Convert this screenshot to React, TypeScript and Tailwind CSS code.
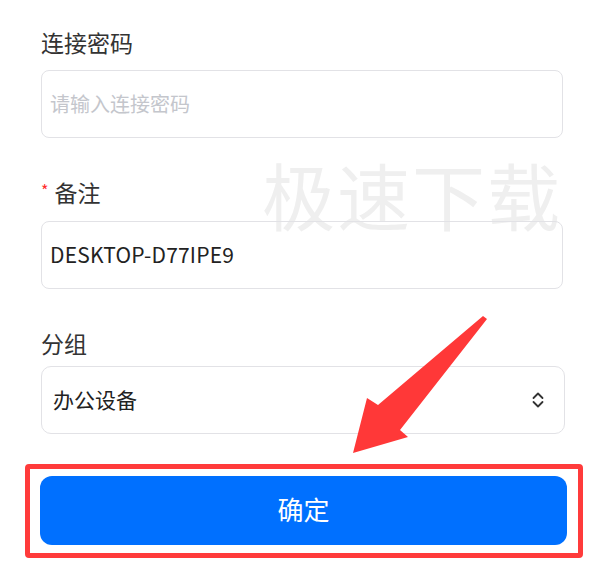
import React from "react";

const font = { fontFamily: '"Noto Sans CJK SC", "Noto Sans", sans-serif' };

export default function App() {
  return (
    <div
      className="relative w-[600px] h-[578px] overflow-hidden bg-white"
      style={font}
    >
      {/* watermark */}
      <div className="pointer-events-none absolute left-[262px] top-[148px] text-[73px] leading-[90px] tracking-[2px] text-[#efefef] select-none">
        极速下载
      </div>

      <div className="relative flex flex-col pl-[41px] pt-[27px]">
        <div className="h-[30px] text-[23px] leading-[30px] text-[#333333]">连接密码</div>
        <div className="mt-[13px] flex h-[68px] w-[522px] items-center rounded-[8px] border border-[#e2e2e6] pl-[8px] text-[20px] text-[#c4c6cc]">
          请输入连接密码
        </div>

        <div className="mt-[39px] flex h-[30px] items-center text-[23px] leading-[30px] text-[#333333]">
          <span className="mr-[6px] mt-[-4px] text-[16px] text-[#ff2d2d]">*</span>
          备注
        </div>
        <div className="mt-[14px] flex h-[68px] w-[522px] items-center rounded-[8px] border border-[#e2e2e6] pl-[8px] text-[21px] tracking-[0.2px] text-[#222222]">
          DESKTOP-D77IPE9
        </div>

        <div className="mt-[39px] h-[30px] text-[23px] leading-[30px] text-[#333333]">分组</div>
        <div className="mt-[8px] flex h-[68px] w-[524px] items-center justify-between rounded-[10px] border border-[#e2e2e6] pl-[11px] pr-[19px] text-[21px] text-[#222222]">
          <span>办公设备</span>
          <svg width="14" height="18" viewBox="0 0 14 18" fill="none" stroke="#333" strokeWidth="1.8" strokeLinecap="round" strokeLinejoin="round">
            <path d="M2.5 7 L7 2.5 L11.5 7" />
            <path d="M2.5 11 L7 15.5 L11.5 11" />
          </svg>
        </div>

        <div className="ml-[-16px] mt-[30px] w-[558px] rounded-[4px] border-[5px] border-[#ff3b3b] pb-[8px] pl-[10px] pr-[11px] pt-[7px]">
          <button className="flex h-[69px] w-full items-center justify-center rounded-[12px] bg-[#0070ff] pb-[4px] text-[26px] text-white">
            确定
          </button>
        </div>
      </div>

      {/* arrow annotation */}
      <svg className="pointer-events-none absolute left-0 top-0" width="600" height="578">
        <polygon
          points="483,316 487,319 400,430 408,437 353,453 367,398 378,405"
          fill="#ff3838"
        />
      </svg>
    </div>
  );
}
